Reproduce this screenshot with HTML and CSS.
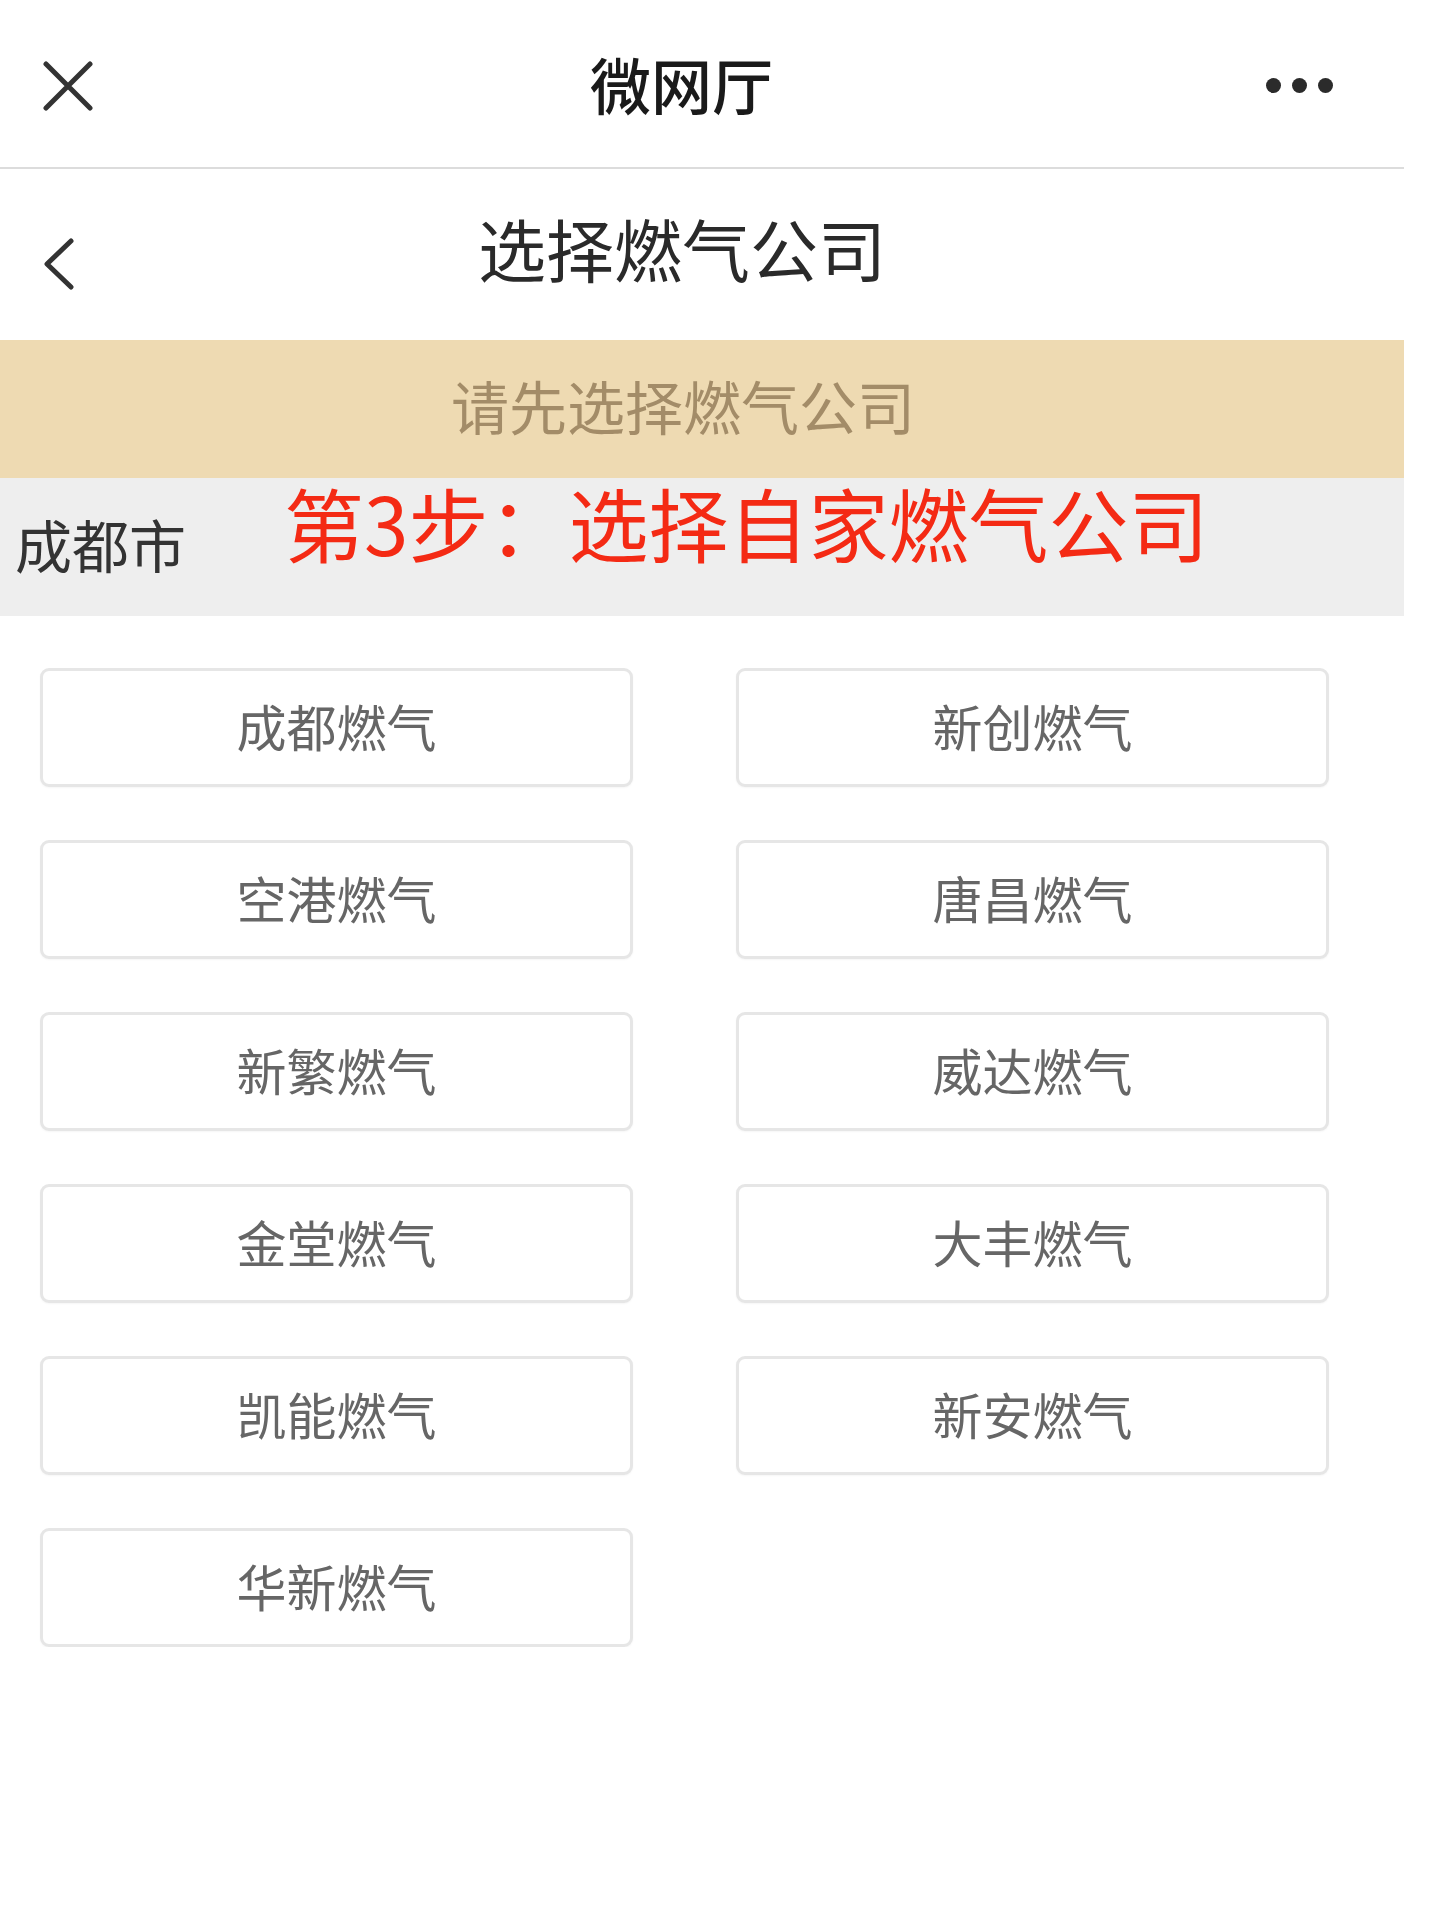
FILE: index.html
```html
<!DOCTYPE html>
<html lang="zh-CN">
<head>
<meta charset="utf-8">
<title>选择燃气公司</title>
<link rel="stylesheet" href="styles.css">
</head>
<body>
<div class="page">
  <header class="topbar">
    <div class="topbar-left">
      <svg class="icon-close" width="50" height="50" viewBox="0 0 50 50"><path d="M3 3 L47 47 M47 3 L3 47" stroke="#333" stroke-width="5" stroke-linecap="round" fill="none"/></svg>
    </div>
    <h1 class="topbar-title">微网厅</h1>
    <div class="topbar-right">
      <span class="dot"></span><span class="dot"></span><span class="dot"></span>
    </div>
  </header>
  <div class="subbar">
    <svg class="icon-back" width="30" height="52" viewBox="0 0 30 52"><path d="M27 3 L3 26 L27 49" stroke="#333" stroke-width="5" stroke-linecap="round" stroke-linejoin="round" fill="none"/></svg>
    <h2 class="subbar-title">选择燃气公司</h2>
  </div>
  <div class="notice">请先选择燃气公司</div>
  <div class="city">
    <span class="city-name">成都市</span>
    <span class="step">第3步：选择自家燃气公司</span>
  </div>
  <div class="grid">
    <button class="item">成都燃气</button>
    <button class="item">新创燃气</button>
    <button class="item">空港燃气</button>
    <button class="item">唐昌燃气</button>
    <button class="item">新繁燃气</button>
    <button class="item">威达燃气</button>
    <button class="item">金堂燃气</button>
    <button class="item">大丰燃气</button>
    <button class="item">凯能燃气</button>
    <button class="item">新安燃气</button>
    <button class="item">华新燃气</button>
  </div>
</div>
</body>
</html>
```
FILE: styles.css
```css
html, body {
  margin: 0;
  padding: 0;
  background: #ffffff;
}
body {
  font-family: "Noto Sans CJK SC", "Noto Sans", sans-serif;
  color: #333;
}
.page {
  width: 1404px;
}
.topbar {
  height: 167px;
  display: flex;
  align-items: center;
  border-bottom: 2px solid #dcdcdc;
}
.topbar-left {
  width: 590px;
  padding-left: 43px;
  box-sizing: border-box;
  display: flex;
  align-items: center;
  padding-top: 4px;
}
.topbar-title {
  margin: 0;
  font-size: 61px;
  font-weight: 500;
  color: #1a1a1a;
  line-height: 1;
  flex: 1;
}
.topbar-right {
  display: flex;
  gap: 11px;
  margin-right: 71px;
  padding-top: 3px;
}
.dot {
  width: 15px;
  height: 15px;
  border-radius: 50%;
  background: #2b2b2b;
}
.subbar {
  height: 171px;
  display: flex;
  align-items: center;
}
.icon-back {
  margin-left: 44px;
  margin-top: 18px;
}
.subbar-title {
  margin: 0 0 14px 404px;
  font-size: 68px;
  font-weight: 400;
  color: #2a2a2a;
  line-height: 1;
}
.notice {
  height: 138px;
  background: #eedab2;
  color: #a38c68;
  font-size: 58px;
  display: flex;
  align-items: center;
  justify-content: center;
  padding-right: 38px;
  padding-bottom: 8px;
  box-sizing: border-box;
}
.city {
  height: 138px;
  background: #eeeeee;
  display: flex;
  align-items: center;
}
.city-name {
  font-size: 57px;
  color: #333;
  margin-left: 15px;
  line-height: 1;
  padding-bottom: 8px;
}
.step {
  font-size: 80px;
  color: #f42a14;
  margin-left: 98px;
  margin-bottom: 52px;
  line-height: 1;
}
.grid {
  display: grid;
  grid-template-columns: 593px 593px;
  column-gap: 103px;
  row-gap: 53px;
  padding: 52px 0 0 40px;
}
.item {
  height: 119px;
  border: 3px solid #e6e6e6;
  border-radius: 9px;
  background: #fff;
  font-family: "Noto Sans CJK SC", "Noto Sans", sans-serif;
  font-size: 50px;
  color: #666;
  padding: 0 0 6px 0;
  box-shadow: 0 1px 2px rgba(0,0,0,0.04);
}
```
